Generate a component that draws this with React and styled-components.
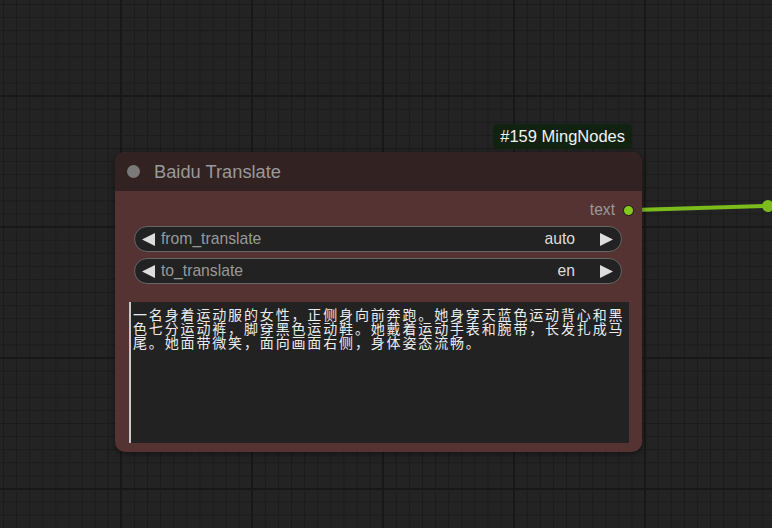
import React from 'react'
import styled, { createGlobalStyle } from 'styled-components'

const Global = createGlobalStyle`
html, body {
  margin: 0;
  padding: 0;
  background: #222;
  overflow: hidden;
}
`

const Canvas = styled.div`
position: relative;
width: 772px;
height: 528px;
overflow: hidden;
background-color: #232323;
background-image:
  linear-gradient(to right, #181818 2px, transparent 2px),
  linear-gradient(to bottom, #181818 2px, transparent 2px),
  linear-gradient(to right, #1b1b1b 1px, transparent 1px),
  linear-gradient(to bottom, #1b1b1b 1px, transparent 1px);
background-size: 131px 100%, 100% 131px, 13.1px 100%, 100% 13.1px;
background-position: 120px 0, 0 95px, 3px 0, 0 4px;
`

const Links = styled.svg`
position: absolute;
left: 0;
top: 0;
width: 772px;
height: 528px;
`

const Node = styled.div`
position: absolute;
left: 115px;
top: 152px;
width: 527px;
height: 300px;
border-radius: 10px;
background: #553333;
box-shadow: 0 2px 6px rgba(0, 0, 0, 0.45);
display: flex;
flex-direction: column;
font-family: "Liberation Sans", Arial, sans-serif;
`

const Badge = styled.div`
position: absolute;
right: 10px;
bottom: calc(100% + 3px);
height: 25px;
padding: 0 7px;
border-radius: 5px;
background: #112211;
color: #f2f2f2;
font-size: 16.5px;
display: flex;
align-items: center;
`

const Title = styled.div`
height: 39px;
flex: none;
display: flex;
align-items: center;
gap: 14px;
padding-left: 12px;
background: #332222;
border-radius: 10px 10px 0 0;
color: #999;
font-size: 18.3px;
`

const Dot = styled.span`
width: 13px;
height: 13px;
border-radius: 50%;
background: #7a7a7a;
`

const Body = styled.div`
flex: 1;
display: flex;
flex-direction: column;
padding-top: 6px;
`

const OutputRow = styled.div`
height: 26px;
display: flex;
align-items: center;
justify-content: flex-end;
gap: 8px;
padding-right: 8px;
color: #999;
font-size: 15.6px;
`

const Slot = styled.span`
width: 9px;
height: 9px;
border-radius: 50%;
background: #86c81f;
border: 1px solid #1a1a1a;
`

const Widgets = styled.div`
display: flex;
flex-direction: column;
gap: 6px;
margin: 3px 20px 0 19px;
`

const Combo = styled.div`
height: 26px;
box-sizing: border-box;
border: 1px solid #666;
border-radius: 13px;
background: #222;
display: flex;
align-items: center;
padding: 0 8px 0 7px;
font-size: 15.7px;
`

const Label = styled.span`
color: #999;
margin-left: 6px;
flex: 1;
`

const Value = styled.span`
color: #ddd;
margin-right: 25px;
`

const Text = styled.textarea`
margin: 18px 0 0 14px;
width: 500px;
height: 141px;
box-sizing: border-box;
border: none;
border-left: 2px solid #c8c8c8;
outline: none;
resize: none;
overflow: hidden;
padding: 5px 0 0 2px;
background: #222;
color: #ececec;
font-family: "Noto Sans CJK SC", sans-serif;
font-size: 14px;
letter-spacing: 1.85px;
line-height: 14px;
`

const Arrow = ({ dir }) => (
  <svg width="13" height="13" viewBox="0 0 13 13">
    {dir === 'left'
      ? <polygon points="13,0 13,13 0,6.5" fill="#ddd" />
      : <polygon points="0,0 13,6.5 0,13" fill="#ddd" />}
  </svg>
)

const ComboWidget = ({ label, value }) => (
  <Combo>
    <Arrow dir="left" />
    <Label>{label}</Label>
    <Value>{value}</Value>
    <Arrow dir="right" />
  </Combo>
)

const prompt = '一名身着运动服的女性，正侧身向前奔跑。她身穿天蓝色运动背心和黑色七分运动裤，脚穿黑色运动鞋。她戴着运动手表和腕带，长发扎成马尾。她面带微笑，面向画面右侧，身体姿态流畅。'

export default function App() {
  return (
    <Canvas>
      <Global />
      <Links>
        <path d="M634 210 L 768 206" stroke="#7cbb1c" strokeWidth="4" fill="none" />
        <circle cx="768" cy="206" r="6" fill="#7cbb1c" />
      </Links>
      <Node>
        <Badge>#159 MingNodes</Badge>
        <Title>
          <Dot />
          Baidu Translate
        </Title>
        <Body>
          <OutputRow>
            text
            <Slot />
          </OutputRow>
          <Widgets>
            <ComboWidget label="from_translate" value="auto" />
            <ComboWidget label="to_translate" value="en" />
          </Widgets>
          <Text defaultValue={prompt} readOnly spellCheck={false} />
        </Body>
      </Node>
    </Canvas>
  )
}
